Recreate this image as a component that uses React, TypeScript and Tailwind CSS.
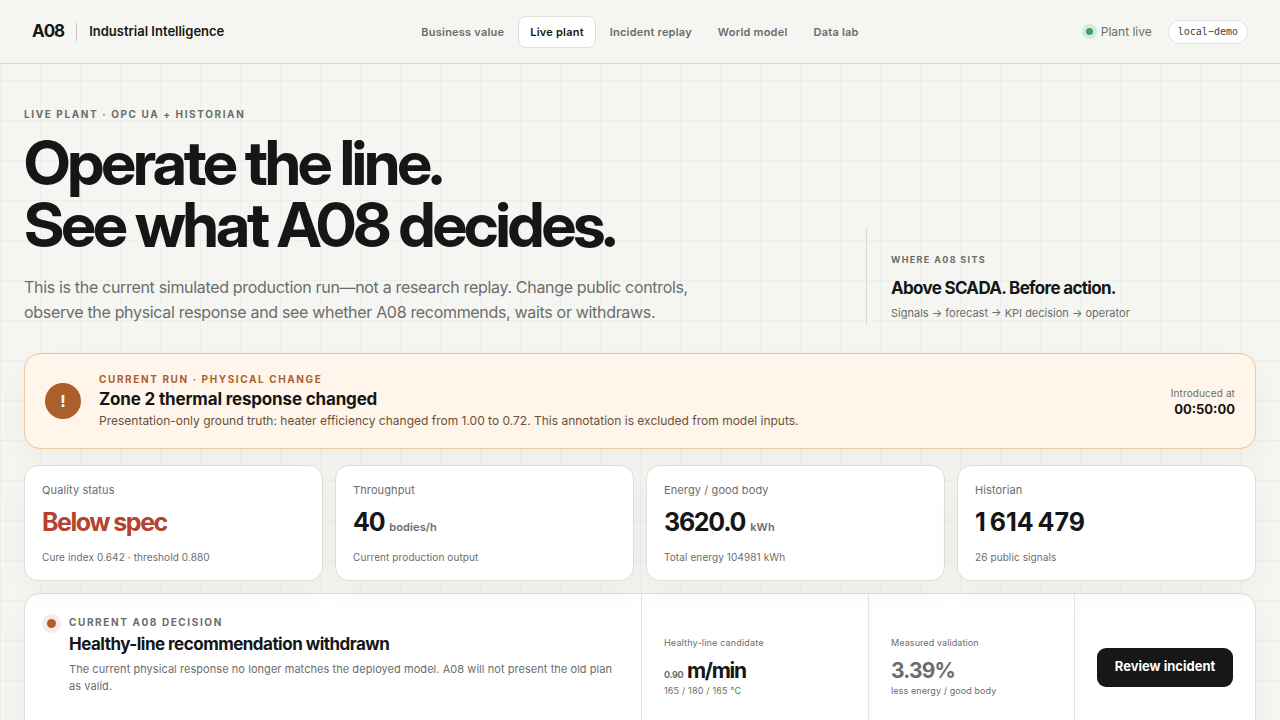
import clsx from "clsx";

type Metric = {
  label: string;
  value: string;
  unit?: string;
  note: string;
  alert?: boolean;
};

const navItems = ["Business value", "Live plant", "Incident replay", "World model", "Data lab"];

const metrics: Metric[] = [
  { label: "Quality status", value: "Below spec", note: "Cure index 0.642 · threshold 0.880", alert: true },
  { label: "Throughput", value: "40", unit: "bodies/h", note: "Current production output" },
  { label: "Energy / good body", value: "3620.0", unit: "kWh", note: "Total energy 104981 kWh" },
  { label: "Historian", value: "1\u202f614\u202f479", note: "26 public signals" },
];

const Header = () => (
  <header className="grid h-16 grid-cols-[1fr_auto_1fr] items-center border-b border-[#d9dbd7] bg-[#f5f6f1] px-8">
    <div className="flex items-center">
      <span className="text-[17px] font-bold tracking-[-0.06em]">A08</span>
      <span className="ml-3 h-[18px] w-px bg-[#c5c8c3]" />
      <span className="ml-3 text-[13px] font-semibold">Industrial Intelligence</span>
    </div>
    <nav className="flex gap-[2px]">
      {navItems.map((item) => (
        <a
          key={item}
          href="#"
          aria-current={item === "Live plant" ? "page" : undefined}
          className={clsx(
            "rounded-lg border px-[11px] py-[6px] text-[11px] leading-[18px] font-semibold tracking-[0.02em]",
            item === "Live plant"
              ? "border-[#dddfdc] bg-white text-[#151617]"
              : "border-transparent text-[#6b6d6c]"
          )}
        >
          {item}
        </a>
      ))}
    </nav>
    <div className="flex items-center justify-end">
      <span className="size-[7px] rounded-full bg-[#479a6c] ring-4 ring-[#d6e9dc]" />
      <span className="ml-2 text-xs text-[#6b6d6c]">Plant live</span>
      <span className="ml-4 rounded-full border border-[#dddfdc] bg-white px-[9px] py-1 font-['DejaVu_Sans_Mono',monospace] text-[10px] leading-[14px] text-[#3f4244]">
        local−demo
      </span>
    </div>
  </header>
);

const Hero = () => (
  <section className="grid grid-cols-[minmax(0,1fr)_390px] items-end">
    <div>
      <p className="text-[10px] leading-3 font-bold tracking-[0.16em] text-[#6b6d6c]">
        LIVE PLANT · OPC UA + HISTORIAN
      </p>
      <h1 className="mt-3 font-['Inter_Display',Inter,sans-serif] text-[62px] leading-[62px] font-bold tracking-[-0.05em]">
        Operate the line.
        <br />
        See what A08 decides.
      </h1>
      <p className="mt-[19px] max-w-[690px] text-base leading-[25px] tracking-[-0.02em] text-[#6b6d6c]">
        This is the current simulated production run—not a research replay. Change public controls, observe
        the physical response and see whether A08 recommends, waits or withdraws.
      </p>
    </div>
    <aside className="border-l border-[#d9dbd7] pt-[26px] pb-[3px] pl-6">
      <p className="text-[9px] leading-3 font-bold tracking-[0.15em] text-[#6b6d6c]">WHERE A08 SITS</p>
      <h2 className="mt-[10px] text-[17px] leading-6 font-bold tracking-[-0.04em]">
        Above SCADA. Before action.
      </h2>
      <p className="mt-1 text-[11px] leading-[18px] text-[#6b6d6c]">Signals → forecast → KPI decision → operator</p>
    </aside>
  </section>
);

const RunAlert = () => (
  <section className="mt-7 flex items-center gap-[18px] rounded-2xl border border-[#e6c99d] bg-[#fff5ea] px-5 py-[19px] shadow-[0_12px_32px_rgba(30,32,30,0.04)]">
    <span className="grid size-9 shrink-0 place-items-center rounded-full bg-[#ab602c] text-base font-bold text-white">
      !
    </span>
    <div className="flex-1">
      <p className="text-[10px] leading-3 font-bold tracking-[0.16em] text-[#ab602c]">
        CURRENT RUN · PHYSICAL CHANGE
      </p>
      <h2 className="mt-1 text-[17px] leading-5 font-bold tracking-[-0.01em]">
        Zone 2 thermal response changed
      </h2>
      <p className="mt-1 text-xs leading-4 text-[#6b5138]">
        Presentation-only ground truth: heater efficiency changed from 1.00 to 0.72. This annotation is excluded
        from model inputs.
      </p>
    </div>
    <div className="text-right">
      <p className="text-[10px] leading-4 tracking-[0.01em] text-[#6b6d6c]">Introduced at</p>
      <p className="text-[13px] leading-4 font-bold">00:50:00</p>
    </div>
  </section>
);

const MetricCard = ({ label, value, unit, note, alert }: Metric) => (
  <article className="rounded-[14px] border border-[#dddfdc] bg-white px-[17px] py-4 shadow-[0_12px_32px_rgba(30,32,30,0.04)]">
    <h3 className="text-[11px] leading-4 tracking-[0.01em] text-[#6b6d6c]">{label}</h3>
    <p
      className={clsx(
        "mt-2 text-[25px] leading-8 font-bold",
        alert ? "tracking-[-0.06em] text-[#b5432f]" : "tracking-[-0.05em]"
      )}
    >
      {value}
      {unit && (
        <span className="ml-[5px] text-[11px] leading-none font-semibold tracking-[0.01em] text-[#6b6d6c]">
          {unit}
        </span>
      )}
    </p>
    <p className="mt-3 text-[10px] leading-[14px] tracking-[0.01em] text-[#6b6d6c]">{note}</p>
  </article>
);

const Decision = () => (
  <section className="mt-3 grid min-h-[148px] grid-cols-[minmax(0,1fr)_227px_206px_181px] rounded-2xl border border-[#dddfdc] bg-white shadow-[0_12px_32px_rgba(30,32,30,0.04)]">
    <div className="flex gap-[13px] py-[22px] pr-6 pl-[22px]">
      <span className="mt-[3px] size-[9px] shrink-0 rounded-full bg-[#ab602c] ring-5 ring-[#f6ece5]" />
      <div>
        <p className="text-[10px] leading-3 font-bold tracking-[0.16em] text-[#6b6d6c]">CURRENT A08 DECISION</p>
        <h2 className="mt-1 text-[17px] leading-6 font-bold tracking-[-0.03em]">
          Healthy-line recommendation withdrawn
        </h2>
        <p className="mt-[5px] text-[11px] leading-[17px] tracking-[0.005em] text-[#6b6d6c]">
          The current physical response no longer matches the deployed model. A08 will not present the old plan as
          valid.
        </p>
      </div>
    </div>
    <div className="flex flex-col justify-center border-l border-[#e3e5e2] px-[22px]">
      <p className="text-[9px] leading-3 tracking-[0.02em] text-[#6b6d6c]">Healthy-line candidate</p>
      <p className="mt-2 text-[21px] leading-7 font-bold tracking-[-0.06em]">
        <span className="text-[9px] leading-none tracking-[-0.04em] text-[#6b6d6c]">0.90</span> m/min
      </p>
      <p className="text-[9px] leading-3 tracking-[0.02em] text-[#6b6d6c]">165 / 180 / 165 °C</p>
    </div>
    <div className="flex flex-col justify-center border-l border-[#e3e5e2] px-[22px]">
      <p className="text-[9px] leading-3 tracking-[0.01em] text-[#6b6d6c]">Measured validation</p>
      <p className="mt-2 text-[21px] leading-7 font-bold tracking-[-0.04em] text-[#6b6d6c]">3.39%</p>
      <p className="text-[9px] leading-3 tracking-[0.01em] text-[#6b6d6c]">less energy / good body</p>
    </div>
    <div className="flex items-center border-l border-[#e3e5e2] px-[22px]">
      <button type="button" className="h-[39px] w-full rounded-[9px] bg-[#151719] text-[13px] font-bold text-white">
        Review incident
      </button>
    </div>
  </section>
);

const App = () => {
  return (
    <div className="min-h-screen bg-[#f5f6f1] bg-[linear-gradient(to_right,rgba(20,24,20,0.03)_1px,transparent_1px),linear-gradient(to_bottom,rgba(20,24,20,0.03)_1px,transparent_1px)] bg-[size:40px_40px] font-[Inter,sans-serif] text-[#151617]">
      <Header />
      <main className="px-6 pt-11 pb-12">
        <Hero />
        <RunAlert />
        <section className="mt-4 grid grid-cols-4 gap-3">
          {metrics.map((m) => (
            <MetricCard key={m.label} {...m} />
          ))}
        </section>
        <Decision />
      </main>
    </div>
  );
};

export default App;
